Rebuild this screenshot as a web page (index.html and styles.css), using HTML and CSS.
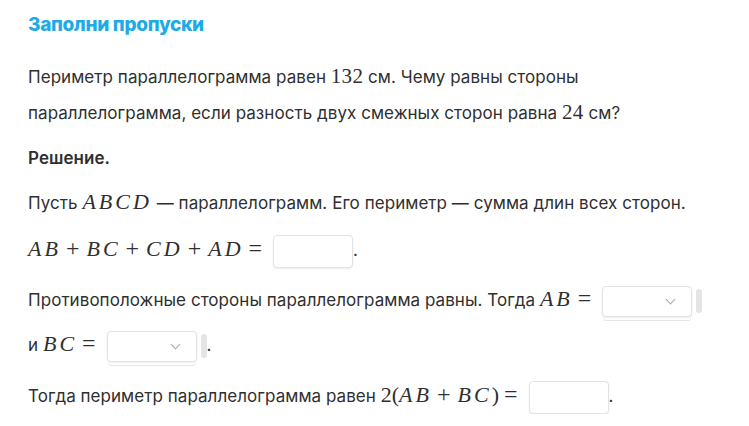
FILE: index.html
```html
<!DOCTYPE html>
<html lang="ru">
<head>
<meta charset="utf-8">
<link rel="stylesheet" href="styles.css">
</head>
<body>
<main class="task">
  <h1 class="title">Заполни пропуски</h1>
  <p class="text">Периметр параллелограмма равен <span class="num">132</span> см. Чему равны стороны параллелограмма, если разность двух смежных сторон равна <span class="num">24</span> см?</p>
  <p class="text bold">Решение.</p>
  <p class="text">Пусть <span class="m"><i>ABCD</i></span> — параллелограмм. Его периметр — сумма длин всех сторон.</p>
  <p class="text mathline"><span class="m"><i>AB</i><span class="op">+</span><i>BC</i><span class="op">+</span><i>CD</i><span class="op">+</span><i>AD</i><span class="op">=</span></span><span class="field"></span>.</p>
  <p class="text tall">Противоположные стороны параллелограмма равны. Тогда <span class="m"><i>AB</i><span class="op">=</span></span><span class="select"><span class="chev"></span></span><span class="grip"></span> и <span class="m"><i>BC</i><span class="op">=</span></span><span class="select"><span class="chev"></span></span><span class="grip"></span>.</p>
  <p class="text last">Тогда периметр параллелограмма равен <span class="m">2(<i>AB</i><span class="op">+</span><i>BC</i>)<span class="op">=</span></span><span class="field"></span>.</p>
</main>
</body>
</html>
```
FILE: styles.css
```css
html, body { margin: 0; padding: 0; background: #fff; }
body { font-family: "Inter", "Noto Sans", sans-serif; color: #2f2f2f; }
.task { padding: 12px 0 0 28px; width: 682px; }
.title { margin: 0; font-size: 19px; line-height: 26px; font-weight: 800; color: #1cabe6; letter-spacing: -0.3px; }
.text { margin: 9px 0 0; font-size: 17px; line-height: 36px; letter-spacing: 0.05px; }
.title + .text { margin-top: 21px; }
.bold { font-weight: 600; }
.num { font-family: "Liberation Serif", serif; font-size: 21px; line-height: 1; letter-spacing: 0.3px; }
.m { font-family: "Liberation Serif", serif; font-size: 22px; line-height: 1; white-space: nowrap; letter-spacing: 0; }
.m i { font-style: italic; letter-spacing: 3px; }
.op { display: inline-block; margin: 0 7px 0 5px; font-size: 24px; font-weight: 300; }
.mathline { margin-top: 11px; }
.tall { line-height: 45px; margin-top: 10px; }
.last { margin-top: 10px; }
.field { display: inline-block; width: 78px; height: 31px; margin-left: 4px; border: 1px solid #e2e2e2; border-radius: 4px; box-shadow: 0 1px 2px rgba(0,0,0,0.08); vertical-align: middle; background: #fff; }
.select { display: inline-block; position: relative; width: 88px; height: 29px; margin-left: 4px; border: 1px solid #e2e2e2; border-radius: 4px; box-shadow: 0 1px 2px rgba(0,0,0,0.08), 0 4px 0 -1px #fff, 0 5px 0 -1px #e6e6e6; vertical-align: middle; background: #fff; }
.chev { position: absolute; right: 17px; top: 9px; width: 6px; height: 6px; border-right: 1.3px solid #a9a9a9; border-bottom: 1.3px solid #a9a9a9; transform: rotate(45deg); }
.grip { display: inline-block; width: 6px; height: 24px; margin-left: 4px; border-radius: 3px; background: #e4e4e4; vertical-align: middle; }
```
